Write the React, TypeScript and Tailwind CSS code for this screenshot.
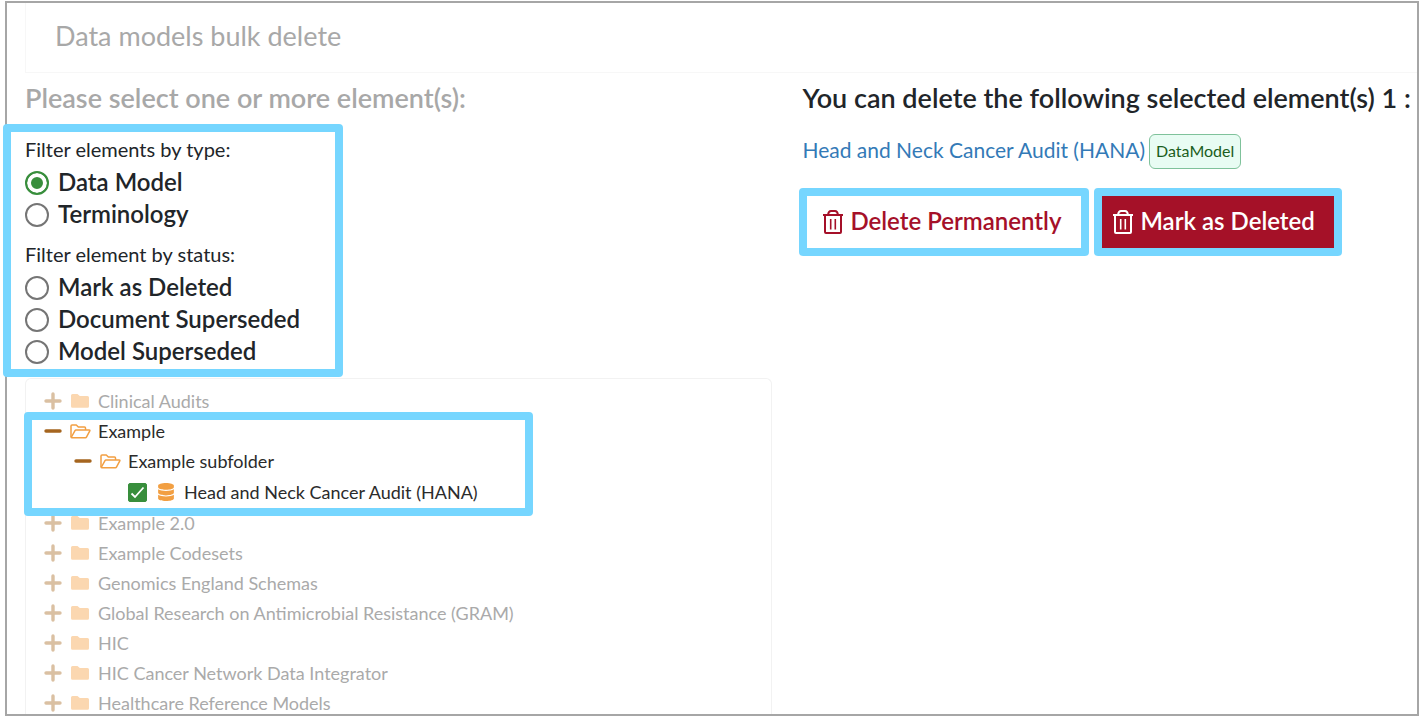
import { useState } from "react";
import type { ReactNode } from "react";
import { FaDatabase } from "react-icons/fa";

const TYPES = ["Data Model", "Terminology"];
const STATUSES = ["Mark as Deleted", "Document Superseded", "Model Superseded"];
const FOLDERS = [
  "Example 2.0",
  "Example Codesets",
  "Genomics England Schemas",
  "Global Research on Antimicrobial Resistance (GRAM)",
  "HIC",
  "HIC Cancer Network Data Integrator",
  "Healthcare Reference Models",
];

function TrashIcon() {
  return (
    <svg width="22" height="26" viewBox="0 0 22 26" fill="none" stroke="currentColor" strokeWidth="2" className="shrink-0" aria-hidden="true">
      <path d="M1 6h20" />
      <path d="M6 6Q6.500 2 9 2h4q2.500 0 3 4" />
      <path d="M3 6v17q0 1 1 1h14q1 0 1-1V6" />
      <path d="M8.700 10v10.500M13.300 10v10.500" strokeWidth="1.600" />
    </svg>
  );
}

function PlusIcon() {
  return (
    <svg width="18" height="18" viewBox="0 0 18 18" stroke="#dac0a2" strokeWidth="3.400" strokeLinecap="round" aria-hidden="true">
      <path d="M2 9h14M9 2v14" />
    </svg>
  );
}

function MinusIcon() {
  return (
    <svg width="18" height="18" viewBox="0 0 18 18" stroke="#a5651f" strokeWidth="3.400" strokeLinecap="round" aria-hidden="true">
      <path d="M2 9h14" />
    </svg>
  );
}

function FolderIcon() {
  return (
    <svg width="20" height="14" viewBox="-1 0 20 14" fill="#fbd7b0" aria-hidden="true">
      <path d="M1.500 0h5l2.300 2h7.700A1.500 1.500 0 0 1 18 3.500v8.700a1.500 1.500 0 0 1-1.500 1.500h-15A1.500 1.500 0 0 1 0 12.200V1.500A1.500 1.500 0 0 1 1.500 0z" />
    </svg>
  );
}

function FolderOpenIcon() {
  return (
    <svg width="21" height="15" viewBox="0 0 21 15" fill="none" stroke="#f29f42" strokeWidth="1.500" strokeLinejoin="round" aria-hidden="true">
      <path d="M1 13V2Q1 1 2 1h4.300l2 2h6.200q1 0 1 1v2" />
      <path d="M1.200 13.500 5 6.700Q5.300 6 6 6h13.200q1 0 .6.900l-3.200 6q-.400.800-1.200.800H1.700q-.700 0-.500-.700z" />
    </svg>
  );
}

function Option({ name, label, checked, onSelect }: { name: string; label: string; checked: boolean; onSelect: () => void }) {
  return (
    <label className="flex h-8 items-center gap-[9px] text-2xl font-semibold">
      <input
        type="radio"
        name={name}
        checked={checked}
        onChange={onSelect}
        className="mt-[2px] size-6 appearance-none rounded-full border-2 border-[#757575] bg-white checked:border-[#388e3c] checked:bg-[#388e3c] checked:shadow-[inset_0_0_0_4px_white]"
      />
      {label}
    </label>
  );
}

function FolderRow({ label, open = false, children }: { label: string; open?: boolean; children?: ReactNode }) {
  return (
    <li>
      <div className="flex h-[30px] items-center">
        <button type="button" aria-label={open ? `Collapse ${label}` : `Expand ${label}`} aria-expanded={open} className="w-[26px]">
          {open ? <MinusIcon /> : <PlusIcon />}
        </button>
        <span className="w-[28px]">{open ? <FolderOpenIcon /> : <FolderIcon />}</span>
        <span className={open ? "text-[#2b2b2b]" : "text-[#aaaaaa]"}>{label}</span>
      </div>
      {children}
    </li>
  );
}

export default function App() {
  const [type, setType] = useState(TYPES[0]);
  const [status, setStatus] = useState("");
  const [picked, setPicked] = useState(true);

  return (
    <div className="h-screen bg-white pt-px pr-px pl-[5px] font-['Lato',sans-serif] text-[#212529]">
      <main className="flex h-full flex-col overflow-y-clip border-2 border-[#a6a6a6] pl-[18px]">
        <header className="flex h-[70px] shrink-0 items-start border-b border-l border-[#f7f7f7] pt-[15px] pl-[29px]">
          <h1 className="text-[27px]/9 text-[#a8a8a8]">Data models bulk delete</h1>
        </header>

        <div className="grid min-h-0 flex-1 grid-cols-[748fr_645fr]">
          <section className="flex min-h-0 flex-col">
            <h2 className="h-[51px] shrink-0 pt-[7px] text-[27px]/9 font-semibold text-[#a8a8a8]">Please select one or more element(s):</h2>

            <div className="relative -ml-[22px] w-[340px] shrink-0 rounded border-8 border-[#76d6ff] bg-white px-[14px] pt-[3px] pb-[2px]">
              <fieldset>
                <legend className="h-[31px] text-xl/7">Filter elements by type:</legend>
                {TYPES.map((t) => (
                  <Option key={t} name="type" label={t} checked={type === t} onSelect={() => setType(t)} />
                ))}
              </fieldset>
              <fieldset className="mt-[10px]">
                <legend className="h-[31px] text-xl/7">Filter element by status:</legend>
                {STATUSES.map((s) => (
                  <Option key={s} name="status" label={s} checked={status === s} onSelect={() => setStatus(s)} />
                ))}
              </fieldset>
            </div>

            <div className="mt-px min-h-0 flex-1 overflow-y-clip rounded-t-md border border-b-0 border-[#f2f2f2] pt-[7px] pl-[18px] text-lg">
              <ul>
                <FolderRow label="Clinical Audits" />
              </ul>
              <div className="relative">
                <ul>
                  <FolderRow label="Example" open>
                    <ul className="pl-[30px]">
                      <FolderRow label="Example subfolder" open>
                        <ul className="pl-[54px]">
                          <li>
                            <label className="flex h-8 items-center text-[#2b2b2b]">
                              <span className="grid size-[19px] place-items-center">
                                <input
                                  type="checkbox"
                                  checked={picked}
                                  onChange={() => setPicked(!picked)}
                                  className="col-start-1 row-start-1 size-[19px] appearance-none rounded-xs border border-[#388e3c] checked:bg-[#388e3c]"
                                />
                                <svg width="15" height="13" viewBox="0 0 15 13" fill="none" stroke="white" strokeWidth="1.800" className="pointer-events-none col-start-1 row-start-1" aria-hidden="true">
                                  <path d="M1.500 7.500 5 11l8.500-9.500" />
                                </svg>
                              </span>
                              <FaDatabase className="mr-[9px] ml-[10px] h-[18px] w-[18px] text-[#f29f42]" />
                              Head and Neck Cancer Audit (HANA)
                            </label>
                          </li>
                        </ul>
                      </FolderRow>
                    </ul>
                  </FolderRow>
                </ul>
                <div className="pointer-events-none absolute -top-1 -bottom-2 -left-5 w-[509px] rounded border-8 border-[#76d6ff]" />
              </div>
              <ul>
                {FOLDERS.map((f) => (
                  <FolderRow key={f} label={f} />
                ))}
              </ul>
            </div>
          </section>

          <section className="pl-[30px]">
            <h2 className="pt-[7px] text-[27px]/9 font-semibold whitespace-nowrap">You can delete the following selected element(s) 1 :</h2>
            <p className="mt-[18px] flex items-start gap-1">
              <a href="#hana" className="text-[21px]/8 text-[#337ab7]">Head and Neck Cancer Audit (HANA)</a>
              <span className="rounded-md border border-[#7fc29b] bg-[#e8fcf3] px-[6px] pt-[3px] pb-1 text-base/[26px] text-[#1b5e20]">DataModel</span>
            </p>
            <div className="mt-[19px] -ml-[3px] flex gap-[5px]">
              <button type="button" className="flex h-[68px] w-[290px] items-center gap-[6px] rounded border-8 border-[#76d6ff] bg-white pl-[15px] text-2xl font-semibold text-[#a51029]">
                <TrashIcon />
                <span className="pb-[3px]">Delete Permanently</span>
              </button>
              <button type="button" className="flex h-[68px] w-[248px] items-center gap-[6px] rounded border-8 border-[#76d6ff] bg-[#a51128] pl-[10px] text-2xl font-semibold text-white">
                <TrashIcon />
                <span className="pb-[3px]">Mark as Deleted</span>
              </button>
            </div>
          </section>
        </div>
      </main>
    </div>
  );
}
